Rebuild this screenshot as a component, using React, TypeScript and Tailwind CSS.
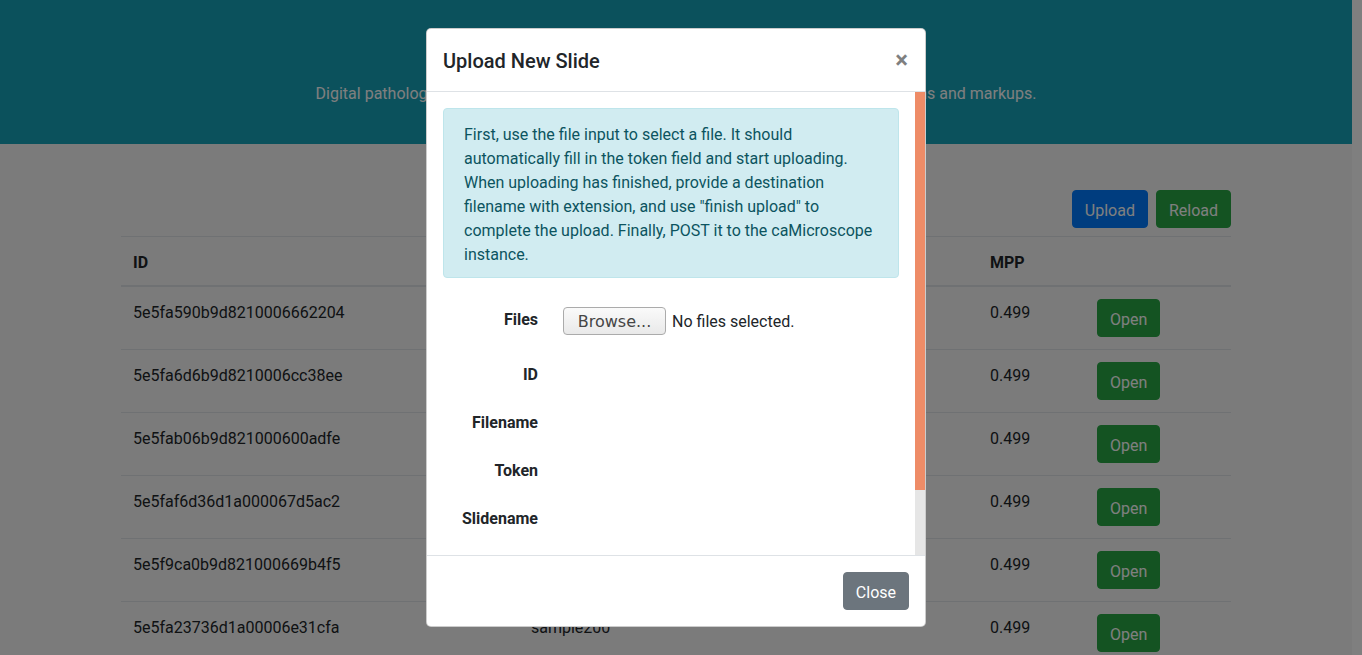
import React from "react";

const rows = [
  { id: "5e5fa590b9d8210006662204", name: "sample100" },
  { id: "5e5fa6d6b9d8210006cc38ee", name: "sample110" },
  { id: "5e5fab06b9d821000600adfe", name: "sample120" },
  { id: "5e5faf6d36d1a000067d5ac2", name: "sample150" },
  { id: "5e5f9ca0b9d821000669b4f5", name: "sample180" },
  { id: "5e5fa23736d1a00006e31cfa", name: "sample200" },
];

export default function App() {
  return (
    <div className="relative w-[1362px] h-[655px] overflow-hidden flex bg-white font-['Roboto',sans-serif] text-[16px] text-[#212529]">
      {/* Page */}
      <div className="w-[1352px] shrink-0 bg-[#f6f7f6]">
        <header className="h-[144px] bg-[#17a2b8] flex flex-col items-center text-white pt-[27px]">
          <h1 className="text-[40px] leading-[48px] font-light">caMicroscope</h1>
          <p className="mt-[7px] leading-6 text-[16px]">
            Digital pathology image viewer with support for human/machine generated annotations and markups.
          </p>
        </header>
        <main className="w-[1110px] mx-auto pt-[46px]">
          <div className="flex justify-end gap-2">
            <button className="h-[38px] px-3 pt-[3px] flex items-center rounded border border-[#007bff] bg-[#007bff] text-white leading-6">
              Upload
            </button>
            <button className="h-[38px] px-3 pt-[3px] flex items-center rounded border border-[#28a745] bg-[#28a745] text-white leading-6">
              Reload
            </button>
          </div>
          <table className="mt-2 w-full table-fixed border-collapse">
            <colgroup>
              <col className="w-[398px]" />
              <col className="w-[459px]" />
              <col className="w-[107px]" />
              <col className="w-[146px]" />
            </colgroup>
            <thead>
              <tr className="border-t border-[#dee2e6]">
                <th className="px-3 pt-[14px] pb-[10px] text-left font-bold leading-6 border-b-2 border-[#dee2e6]">ID</th>
                <th className="px-3 pt-[14px] pb-[10px] text-left font-bold leading-6 border-b-2 border-[#dee2e6]">Name</th>
                <th className="px-3 pt-[14px] pb-[10px] text-left font-bold leading-6 border-b-2 border-[#dee2e6]">MPP</th>
                <th className="px-3 pt-[14px] pb-[10px] text-left font-bold leading-6 border-b-2 border-[#dee2e6]"></th>
              </tr>
            </thead>
            <tbody>
              {rows.map((r) => (
                <tr key={r.id} className="border-t border-[#dee2e6]">
                  <td className="px-3 pt-[14px] pb-[10px] align-top leading-6">{r.id}</td>
                  <td className="px-3 pt-[14px] pb-[10px] align-top leading-6">{r.name}</td>
                  <td className="px-3 pt-[14px] pb-[10px] align-top leading-6">0.499</td>
                  <td className="p-3 align-top leading-6">
                    <button className="h-[38px] px-3 pt-[3px] flex items-center rounded border border-[#28a745] bg-[#28a745] text-white leading-6">
                      Open
                    </button>
                  </td>
                </tr>
              ))}
            </tbody>
          </table>
        </main>
      </div>
      <div className="w-[10px] shrink-0 bg-white" />

      {/* Backdrop */}
      <div className="absolute inset-0 bg-black/50" />

      {/* Modal */}
      <div className="absolute left-[426px] top-[28px] w-[500px] h-[599px] bg-white border border-black/20 rounded-[5px] flex flex-col overflow-hidden">
        <div className="h-[63px] shrink-0 flex items-start justify-between px-4 pt-[17px] border-b border-[#dee2e6]">
          <h5 className="text-[20px] leading-[30px] font-medium text-[#212529]">Upload New Slide</h5>
          <span className="mt-[2px] mr-[1px] text-[24px] leading-none font-bold text-black/50">×</span>
        </div>
        <div className="h-[463px] shrink-0 flex">
          <div className="flex-1 p-4 overflow-hidden">
            <div className="border border-[#bee5eb] bg-[#d1ecf1] text-[#0c5460] rounded px-5 pt-[14px] pb-[10px] leading-6">
              First, use the file input to select a file. It should automatically fill in the token field and start
              uploading. When uploading has finished, provide a destination filename with extension, and use "finish
              upload" to complete the upload. Finally, POST it to the caMicroscope instance.
            </div>
            <div className="mt-[22px]">
              <div className="h-[55px] flex items-start">
                <label className="w-[95px] shrink-0 text-right font-bold leading-6 pt-[8px]">Files</label>
                <div className="ml-[25px] pt-[7px] flex items-center">
                  <span className="h-[28px] w-[103px] pt-[1px] flex items-center justify-center rounded-[4px] border border-[#ababab] bg-gradient-to-b from-[#fafafa] to-[#e9e9e9] text-[#454545] font-['DejaVu_Sans',sans-serif] text-[16px] leading-none">
                    Browse...
                  </span>
                  <span className="ml-[6px] mt-[2px] leading-6">No files selected.</span>
                </div>
              </div>
              {["ID", "Filename", "Token", "Slidename", "Hash"].map((l) => (
                <div key={l} className="h-[48px] flex items-start">
                  <label className="w-[95px] shrink-0 text-right font-bold leading-6 pt-[8px]">{l}</label>
                </div>
              ))}
            </div>
          </div>
          <div className="w-[10px] shrink-0 flex flex-col">
            <div className="h-[398px] bg-[#ee8c67]" />
            <div className="flex-1 bg-[#e6e6e6]" />
          </div>
        </div>
        <div className="flex-1 border-t border-[#dee2e6] p-4 flex justify-end items-start">
          <button className="h-[38px] px-3 pt-[3px] flex items-center rounded border border-[#6c757d] bg-[#6c757d] text-white leading-6">
            Close
          </button>
        </div>
      </div>
    </div>
  );
}
